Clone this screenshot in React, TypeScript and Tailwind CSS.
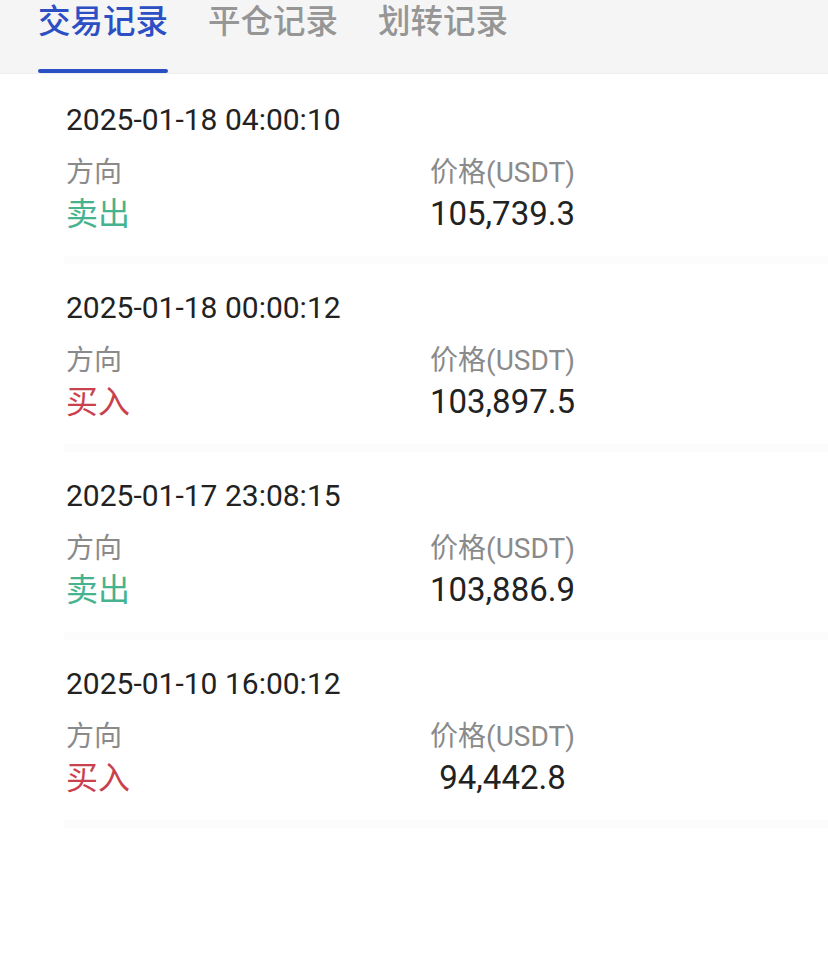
import React from "react";

const records = [
  { time: "2025-01-18 04:00:10", side: "卖出", price: "105,739.3" },
  { time: "2025-01-18 00:00:12", side: "买入", price: "103,897.5" },
  { time: "2025-01-17 23:08:15", side: "卖出", price: "103,886.9" },
  { time: "2025-01-10 16:00:12", side: "买入", price: "94,442.8" },
];

const font = { fontFamily: 'Roboto, "Noto Sans CJK SC", sans-serif' };

export default function App() {
  return (
    <div className="w-[828px] h-[974px] bg-white" style={font}>
      {/* Tabs */}
      <div className="h-[74px] bg-[#f5f5f5] border-b border-[#efefef] flex pl-[38px] gap-[40px]">
        <div className="flex flex-col">
          <span className="text-[32.5px] leading-[44px] font-medium text-[#2c4fc4]">交易记录</span>
          <span className="mt-[25px] h-[4px] rounded-full bg-[#2c4fc4]" />
        </div>
        <span className="text-[32.5px] leading-[44px] font-medium text-[#969696]">平仓记录</span>
        <span className="text-[32.5px] leading-[44px] font-medium text-[#969696]">划转记录</span>
      </div>

      {/* Records */}
      <div className="pt-[28px]">
        {records.map((r) => (
          <div key={r.time} className="mb-[26px]">
            <div className="pl-[66px] text-[30px] leading-[36px] text-[#222]">{r.time}</div>
            <div className="pl-[66px] mt-[17px] flex">
              <div className="w-[356px]">
                <div className="text-[28px] leading-[36px] text-[#8a8a8a]">方向</div>
                <div
                  className={`mt-[5px] text-[32px] leading-[36px] ${
                    r.side === "卖出" ? "text-[#46b38e]" : "text-[#c9414c]"
                  }`}
                >
                  {r.side}
                </div>
              </div>
              <div className="w-[161px] text-center">
                <div className="text-[28px] leading-[36px] text-[#8a8a8a]">价格(USDT)</div>
                <div className="mt-[5px] text-[33px] leading-[36px] text-[#222]">{r.price}</div>
              </div>
            </div>
            <div className="ml-[64px] mt-[24px] h-[8px] bg-[#fcfcfc]" />
          </div>
        ))}
      </div>
    </div>
  );
}
